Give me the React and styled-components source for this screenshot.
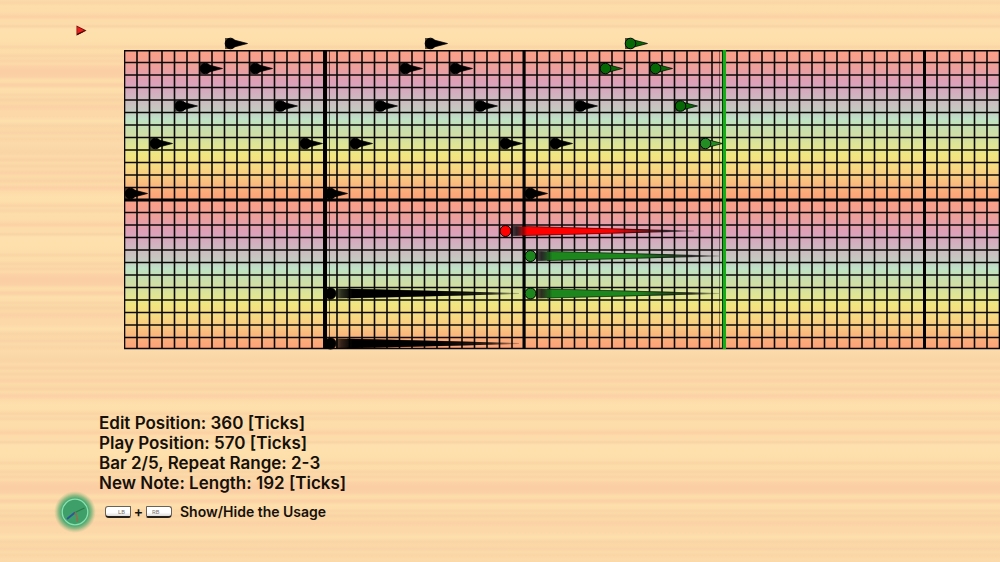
import React from "react";
import styled, { createGlobalStyle } from "styled-components";

const GlobalStyle = createGlobalStyle`
  *, *::before, *::after { box-sizing: border-box; }
  body {
    margin: 0;
    background-color: #fddca9;
    background-image: repeating-linear-gradient(
      to bottom,
      #fcdba9 0px, #fad5a6 3px, #fddfab 6px, #fddcaa 12px,
      #fbd1a4 17px, #fddcaa 20px, #fcdcaa 24px, #f9d3a4 26px, #fde0ad 29px,
      #fee0ad 38px, #fddeab 44px, #fad5a5 47px, #fddda9 50px, #fddca9 53px,
      #f9d3a4 56px, #fcd9a8 58px, #fad4a5 61px, #fddaa9 64px,
      #fbd1a5 67px, #fbcea3 72px, #fbd1a5 77px, #fdddaa 80px, #fddba9 82px,
      #fbcfa4 85px, #fddfac 89px, #fddeab 92px, #fad5a5 95px, #fcdaa8 97px,
      #f8d2a3 100px, #fcd9a7 103px, #fbd1a5 107px, #fcd7a8 111px, #fcd7a8 116px,
      #fee0ad 121px, #f9d4a5 126px, #fcd8a7 129px, #f9d3a5 133px, #fcdba9 136px,
      #fad5a5 139px, #fddaa9 143px, #fbd8a8 148px, #f9d4a5 153px, #fddaa9 156px,
      #f9d2a4 160px, #fcdba9 163px, #f9d3a4 166px, #fcd9a8 169px, #fbd1a5 173px,
      #fddba9 176px, #f9d3a4 181px, #fddba9 184px, #fbd0a5 188px, #fddba9 192px,
      #fee0ad 197px, #fddfab 202px, #fad3a4 206px, #fcdba9 208px
    );
    color: #15100a;
    font-family: Inter, "Liberation Sans", sans-serif;
  }
`;

const Page = styled.main`
  display: flex;
  flex-direction: column;
  min-height: 100vh;
  overflow: hidden;
`;

const TopBar = styled.header`
  display: flex;
  align-items: flex-end;
  height: 36px;
  padding-left: 76px;
`;

const RollArea = styled.section`
  padding-left: 124px;
`;

const Roll = styled.svg`
  display: block;
  width: 100%;
  height: 314px;
`;

const Status = styled.section`
  display: flex;
  flex-direction: column;
  padding: 63px 0 0 99px;
`;

const StatusLine = styled.p`
  margin: 0;
  font-size: 17px;
  font-weight: 600;
  line-height: 20px;
  white-space: nowrap;
`;

const Footer = styled.footer`
  display: flex;
  align-items: center;
  gap: 8px;
  height: 38px;
  padding-left: 53px;
`;

const UsageButton = styled.button`
  display: flex;
  align-items: center;
  padding: 0;
  border: 0;
  background: none;
  color: inherit;
  font: 600 14px/20px Inter, "Liberation Sans", sans-serif;
  white-space: nowrap;
  cursor: pointer;
`;

const Key = styled.kbd`
  display: flex;
  align-items: center;
  justify-content: ${(p) => (p.$side === "left" ? "flex-end" : "flex-start")};
  width: 26px;
  height: 12px;
  padding: 0 5px;
  border: 1px solid #6b6257;
  border-bottom: 2px solid #241f1a;
  border-radius: ${(p) => (p.$side === "left" ? "3px 1px 2px 4px" : "1px 3px 4px 2px")};
  background: linear-gradient(#ffffff 60%, #dedbd7);
  color: #77716c;
  font: 6px/8px Roboto, sans-serif;
`;

const Plus = styled.span`
  width: 15px;
  text-align: center;
`;

const UsageLabel = styled.span`
  padding-left: 8px;
`;

const BAR = 200;
const STEP = BAR / 16;
const ROWS = 24;
const HEIGHT = STEP * ROWS;
const OCTAVE = HEIGHT / 2;

const SPECTRUM = [
  [0, "#fd9f86"], [10, "#f5a090"], [20, "#eaa0a0"], [32, "#dda0b8"],
  [40, "#d6a9bd"], [47, "#cfb6c0"], [57, "#c7c4c0"], [62, "#c4cdc2"],
  [69, "#bfe3c8"], [77, "#c6dfb0"], [87, "#d3dfa2"], [95, "#dee596"],
  [105, "#f1e680"], [118, "#f7d982"], [131, "#f9c180"], [143, "#fca97a"],
  [150, "#fda179"],
];

const short = (step, row, color = "#000") => ({ step, row, color });

const NOTES = [
  ...[0, 16].flatMap((s) => [
    short(s, 11), short(s + 2, 7), short(s + 4, 4), short(s + 6, 1),
    short(s + 8, -1), short(s + 10, 1), short(s + 12, 4), short(s + 14, 7),
  ]),
  short(32, 11), short(34, 7), short(36, 4),
  short(38, 1, "#056805"), short(40, -1, "#056805"), short(42, 1, "#056805"),
  short(44, 4, "#056805"), short(46, 7, "#238c23"),
];

const LONG_NOTES = [
  { step: 16, row: 19, color: "#000000", id: "tail-black" },
  { step: 16, row: 23, color: "#000000", id: "tail-black" },
  { step: 32, row: 16, color: "#1d861d", id: "tail-green" },
  { step: 32, row: 19, color: "#1d861d", id: "tail-green" },
  { step: 30, row: 14, color: "#ff0000", id: "tail-red" },
];

const centre = (row) => row * STEP + 6;

function ShortNote({ step, row, color }) {
  return (
    <g transform={`translate(${step * STEP + 1} ${centre(row)})`}>
      <path d="M0 -5.5H5V5.5H0Z" fill="#000" opacity="0.65" />
      <path d="M9 -3.5L22.5 0L9 3.5Z" fill={color} stroke="#000" strokeWidth="0.7" />
      <circle cx="5.5" cy="0" r="5.3" fill={color} stroke="#000" strokeWidth="1" />
    </g>
  );
}

function LongNote({ step, row, color, id }) {
  return (
    <g transform={`translate(${step * STEP + 1} ${centre(row)})`}>
      <path d="M11 -5L194 -0.5V0.5L11 5Z" fill={`url(#${id})`} />
      <path d="M22 -4.6L150 -1.2M22 4.6L150 1.2" stroke="#000" strokeWidth="0.7" opacity="0.7" />
      <circle cx="5.5" cy="0" r="5.5" fill={color} stroke="#000" strokeWidth="1" />
    </g>
  );
}

function TailFill({ id, color }) {
  return (
    <linearGradient id={id} gradientUnits="userSpaceOnUse" x1="11" x2="194" y1="0" y2="0">
      <stop offset="0" stopColor="#000" stopOpacity="0.6" />
      <stop offset="0.03" stopColor="#000" stopOpacity="0.8" />
      <stop offset="0.09" stopColor={color} />
      <stop offset="0.55" stopColor={color} />
      <stop offset="0.85" stopColor="#000" stopOpacity="0.8" />
      <stop offset="1" stopColor="#000" stopOpacity="0.2" />
    </linearGradient>
  );
}

function PianoRoll() {
  const columns = Array.from({ length: 240 }, (_, i) => i * STEP + 0.5);
  const rows = Array.from({ length: ROWS - 1 }, (_, i) => (i + 1) * STEP);
  return (
    <Roll role="img" aria-label="Note grid">
      <defs>
        <linearGradient id="octave" x1="0" x2="0" y1="0" y2="1">
          {SPECTRUM.map(([y, color]) => (
            <stop key={y} offset={y / OCTAVE} stopColor={color} />
          ))}
        </linearGradient>
        <TailFill id="tail-black" color="#000000" />
        <TailFill id="tail-green" color="#1d861d" />
        <TailFill id="tail-red" color="#ff0000" />
      </defs>
      <g transform="translate(0 14)">
        <rect y="0" width="100%" height={OCTAVE} fill="url(#octave)" />
        <rect y={OCTAVE} width="100%" height={OCTAVE - 1} fill="url(#octave)" />
        <g stroke="#0b0908" strokeWidth="1.6">
          {columns.map((x) => (
            <line key={x} x1={x} x2={x} y1="0" y2={HEIGHT - 1} />
          ))}
          {rows.map((y) => (
            <line key={y} x1="0" x2="100%" y1={y} y2={y} />
          ))}
          <line x1="0" x2="100%" y1="0.75" y2="0.75" />
          <line x1="0" x2="100%" y1={HEIGHT - 1.5} y2={HEIGHT - 1.5} />
        </g>
        <svg x="100%" width="1" height={HEIGHT} overflow="visible">
          <line x1="-0.5" x2="-0.5" y1="0" y2={HEIGHT - 1} stroke="#000" />
        </svg>
        <line x1="0" x2="100%" y1="150" y2="150" stroke="#000" strokeWidth="3" />
        <line x1="201" x2="201" y1="0" y2={HEIGHT - 1} stroke="#000" strokeWidth="4" />
        <line x1="205.5" x2="205.5" y1="0" y2={HEIGHT - 1} stroke="#000" strokeWidth="1" opacity="0.6" />
        <line x1="400" x2="400" y1="0" y2={HEIGHT - 1} stroke="#000" strokeWidth="3" />
        <line x1="800.5" x2="800.5" y1="0" y2={HEIGHT - 1} stroke="#000" strokeWidth="3" />
        <line x1="595.5" x2="595.5" y1="0" y2={HEIGHT - 1} stroke="#000" strokeWidth="1" opacity="0.45" />
        <line x1="600" x2="600" y1="0" y2={HEIGHT - 1} stroke="#073b07" strokeWidth="4" />
        <line x1="600.5" x2="600.5" y1="0" y2={HEIGHT - 1} stroke="#16ae16" strokeWidth="3" />
        {NOTES.map((n) => (
          <ShortNote key={`${n.step}-${n.row}`} {...n} />
        ))}
        {LONG_NOTES.map((n) => (
          <LongNote key={`${n.step}-${n.row}`} {...n} />
        ))}
      </g>
    </Roll>
  );
}

function PlayMarker() {
  return (
    <svg width="11" height="11" viewBox="0 0 11 11" aria-hidden="true">
      <path d="M0.5 0.5L10.5 5.5L0.5 10.5Z" fill="#6d0f08" />
      <path d="M1.2 1.8L8 5.2L1.2 8.8Z" fill="#ee1c1c" />
      <path d="M10.5 5.5L0.5 10.5L2 8.6Z" fill="#2a0604" />
    </svg>
  );
}

function StickIcon() {
  return (
    <svg width="44" height="44" viewBox="0 0 44 44" aria-hidden="true">
      <defs>
        <radialGradient id="glow">
          <stop offset="0" stopColor="#43a66c" />
          <stop offset="0.64" stopColor="#43a66c" />
          <stop offset="0.8" stopColor="#6cae76" stopOpacity="0.7" />
          <stop offset="1" stopColor="#a5bd86" stopOpacity="0" />
        </radialGradient>
      </defs>
      <circle cx="22" cy="22" r="21" fill="url(#glow)" />
      <circle cx="22" cy="22" r="12.8" fill="#3f9f68" stroke="#8be0b1" strokeWidth="1.3" />
      <path d="M14 29L22 22.5" stroke="#2c559c" strokeWidth="1.8" />
      <path d="M22 22.5L31.5 18" stroke="#2b7a4a" strokeWidth="1.3" />
      <path d="M22 22.5Q24.5 26 24.5 32" stroke="#8a7350" strokeWidth="1.6" fill="none" />
    </svg>
  );
}

export default function App() {
  return (
    <>
      <GlobalStyle />
      <Page>
        <TopBar>
          <PlayMarker />
        </TopBar>
        <RollArea>
          <PianoRoll />
        </RollArea>
        <Status>
          <StatusLine>Edit Position: 360 [Ticks]</StatusLine>
          <StatusLine>Play Position: 570 [Ticks]</StatusLine>
          <StatusLine>Bar 2/5, Repeat Range: 2-3</StatusLine>
          <StatusLine>New Note: Length: 192 [Ticks]</StatusLine>
        </Status>
        <Footer>
          <StickIcon />
          <UsageButton type="button">
            <Key $side="left">LB</Key>
            <Plus>+</Plus>
            <Key $side="right">RB</Key>
            <UsageLabel>Show/Hide the Usage</UsageLabel>
          </UsageButton>
        </Footer>
      </Page>
    </>
  );
}
